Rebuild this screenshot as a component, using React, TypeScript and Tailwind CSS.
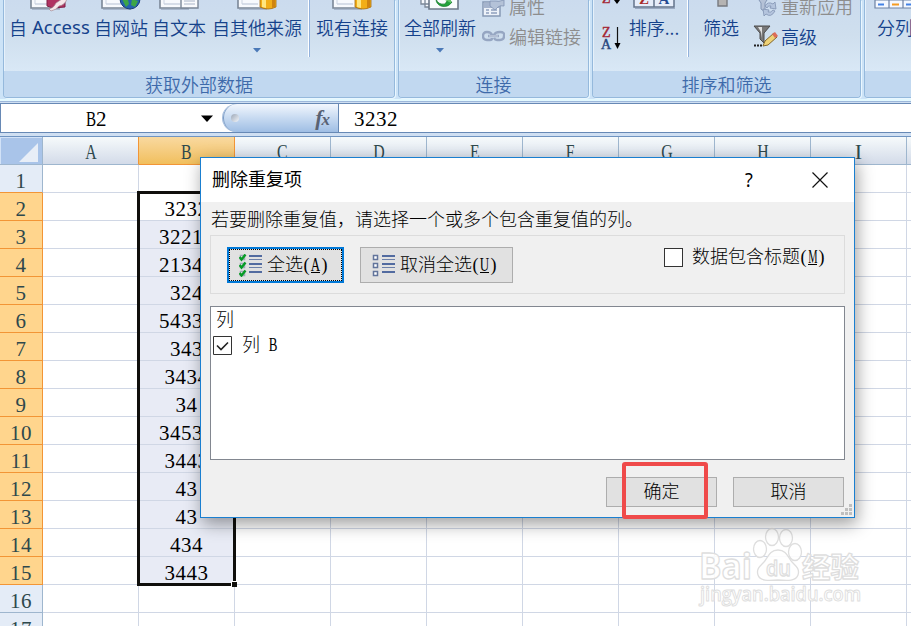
import React from "react";

const SERIF = "font-['Liberation_Serif','Noto_Sans_CJK_SC',serif]";
const SANS = "font-['Noto_Sans_CJK_SC','Noto_Sans',sans-serif]";
const COLS = ["A", "B", "C", "D", "E", "F", "G", "H", "I", "J"];
const VALUES: Record<number, string> = {
  2: "3232", 3: "32213", 4: "21343", 5: "324", 6: "54334", 7: "343", 8: "3434",
  9: "34", 10: "34534", 11: "3443", 12: "43", 13: "43", 14: "434", 15: "3443",
};
const ROWS = Array.from({ length: 17 }, (_, i) => i + 1);

function Letter({ c, small, line }: { c: string; small?: boolean; line?: boolean }) {
  return (
    <span className={`inline-flex justify-center tracking-normal ${small ? "w-[9px]" : "w-[11px]"} ${line ? "h-[18px] border-b border-black" : ""}`}>
      <span className={`inline-block ${c === "I" || c === "(" || c === ")" ? "" : c === "M" ? "scale-x-[0.58]" : "scale-x-[0.72]"}`}>{c}</span>
    </span>
  );
}

function Arrow() {
  return (
    <svg width="8" height="5" viewBox="0 0 8 5" className="mx-auto mt-[11px]">
      <path d="M0 0h8L4 4.5z" fill="#4b79b7" />
    </svg>
  );
}

function Sheet() {
  return (
    <>
      <path d="M2 -4h28v12h-28z" fill="#f7f9fd" stroke="#7b8797" strokeWidth="1.6" />
      <path d="M6 0v4h16M6 4h16" stroke="#cbd3e1" fill="none" />
      <path d="M3 9.5h28" stroke="#8d9cb5" strokeOpacity=".6" />
    </>
  );
}

function Cylinder({ x }: { x: number }) {
  return (
    <>
      <path d={`M${x} -3h16v10q-8 4 -16 0z`} fill="#f2ae18" stroke="#a56b0c" strokeWidth=".8" />
      <path d={`M${x + 2} -3h4v11l-4 -1z`} fill="#ffe680" />
      <path d={`M${x + 12} -3h3v10l-3 1z`} fill="#cf8310" />
    </>
  );
}

type Kind = "access" | "web" | "text" | "other" | "existing" | "refresh" | "sort" | "filter" | "split";

function BigIcon({ kind }: { kind: Kind }) {
  return (
    <svg width="42" height="12" viewBox="0 0 42 12" className="mx-auto block shrink-0">
      {kind === "access" && (<><Sheet /><path d="M18 -2h18v9l-12 1-6-2z" fill="#b03361" stroke="#7c2147" /><path d="M20 9q5-1 7-6l6-4h5q-2 6-8 7-3 4-8 5z" fill="#f6e6e8" stroke="#a58b95" strokeWidth=".7" /></>)}
      {kind === "web" && (<><Sheet /><circle cx="30" cy="-1" r="10" fill="#2562ae" stroke="#183f77" /><path d="M22 -1l6 1 1 4-3 3zM32 -1l6 2-3 6-4-2z" fill="#3ca645" /></>)}
      {kind === "text" && (<><Sheet /><path d="M23 -3h17v11h-17z" fill="#f9fafc" stroke="#7b8797" strokeWidth="1.4" /><path d="M26 1h11M26 4h11" stroke="#a9b4c7" /></>)}
      {kind === "other" && (<><Sheet /><Cylinder x={24} /></>)}
      {kind === "existing" && (<><Sheet /><Cylinder x={24} /></>)}
      {kind === "refresh" && (<><path d="M2 -4h20v8h-20zM6 -2h20v9h-20z" fill="#f7f9fd" stroke="#7b8797" strokeWidth="1.3" /><path d="M10 -4h29v13h-29z" fill="#f9fcfd" stroke="#6d7989" strokeWidth="1.6" /><path d="M17 -1q2 6 9 5l2-3 5 1q-4 6-11 4-5-2-5-7z" fill="#22a43a" stroke="#14752a" strokeWidth=".7" /><path d="M24 -1l8 0 0 4z" fill="#63c568" /></>)}
      {kind === "sort" && (<><path d="M1 -3h20v10h-20zM21 -3h20v10h-20z" fill="#e6edfa" stroke="#64748c" strokeWidth="1.5" /><path d="M2 8.5h40" stroke="#9aa9c2" /><text x="11" y="4" textAnchor="middle" className="font-['Liberation_Serif',serif] text-[15px] font-bold" fill="#aa2b2b">Z</text><text x="31" y="4" textAnchor="middle" className="font-['Liberation_Serif',serif] text-[15px] font-bold" fill="#254a92">A</text></>)}
      {kind === "filter" && <path d="M16 -3h9v9h-9z" fill="#b5b3b2" stroke="#77797f" strokeWidth="1.4" />}
      {kind === "split" && (<><path d="M1 -3h44v11h-44zM1 0h44M15 -3v11M29 -3v11" fill="#f4f8ff" stroke="#6d81a3" strokeWidth="1.2" /><path d="M4 4.500h6M32 4.500h6" stroke="#4381e5" strokeWidth="2" /><path d="M18 4.500h7" stroke="#f59b20" strokeWidth="2" /></>)}
    </svg>
  );
}

function Big({ label, icon, className, arrow }: { label: React.ReactNode; icon: Kind; className: string; arrow?: boolean }) {
  return (
    <div className={`flex shrink-0 flex-col whitespace-nowrap text-[18px] leading-[20px] text-[#15428b] ${className}`}>
      <BigIcon kind={icon} />
      <div className="mt-[5px] flex justify-center">{label}</div>
      {arrow && <Arrow />}
    </div>
  );
}

function Group({ title, className, children }: { title: string; className: string; children: React.ReactNode }) {
  return (
    <section className={`flex h-[98px] shrink-0 flex-col overflow-hidden rounded-b-[4px] border-x border-b border-[#95b9dc] shadow-[1px_1px_0_#eaf7ff] ${className}`}>
      <div className="flex h-[71px] shrink-0 border-l border-[#e6f1fb] bg-linear-to-b from-[#cbdbee] via-[#cfdfee] to-[#d9e8f6]">{children}</div>
      <div className="h-[26px] bg-[#c1d8f0] text-center text-[18px] leading-[26px] text-[#3e6aaa]">{title}</div>
    </section>
  );
}

function Sep({ className }: { className: string }) {
  return <div className={`h-[57px] w-[2px] shrink-0 border-l border-white bg-[#93b2dc] ${className}`} />;
}

function Ribbon() {
  return (
    <header className={`flex h-[101px] w-[1000px] shrink-0 gap-[3px] border-b-2 border-[#e2f8ff] bg-[#cce3f7] pl-[3px] font-[350] ${SANS}`}>
      <Group title="获取外部数据" className="w-[392px]">
        <Big icon="access" label={<>自<span className="ml-[5px] inline-block w-[58px] font-['Noto_Sans',sans-serif] text-[18.500px] font-normal">Access</span></>} className="ml-[4px] w-[81px]" />
        <Big icon="web" label="自网站" className="ml-[4px] w-[54px]" />
        <Big icon="text" label="自文本" className="ml-[4px] w-[54px]" />
        <Big icon="other" label="自其他来源" className="ml-[6px] w-[90px]" arrow />
        <Sep className="ml-[6px]" />
        <Big icon="existing" label="现有连接" className="ml-[6px] w-[72px]" />
      </Group>
      <Group title="连接" className="w-[191px]">
        <Big icon="refresh" label="全部刷新" className="ml-[4px] w-[72px]" arrow />
        <div className="ml-[6px] flex flex-col text-[18px] leading-[20px] text-[#8d8d8d]">
          <div className="-mt-[4px] flex h-[30px] gap-[4px]">
            <svg width="23" height="22" viewBox="0 0 23 22"><path d="M1 6h17v14h-17z" fill="#edf2f9" stroke="#8799b5" strokeWidth="1.5" /><path d="M2 7h15v5h-15z" fill="#a5b4cd" /><path d="M4 14h3M9 14h6M4 17h3M9 17h6" stroke="#8fa0bd" strokeWidth="1.5" /><path d="M8 5h6q2 1 8-1v6q-4-1-6 1l-3 3-5-4z" fill="#b4c2d8" stroke="#8293b3" strokeWidth=".8" /></svg>
            <span>属性</span>
          </div>
          <div className="flex gap-[4px]">
            <svg width="23" height="20" viewBox="0 0 23 20"><path d="M10 9q-1-3-5-3t-4 4q0 4 4 4h3q2 0 2-2M12 9q1-3 6-3t4 4q0 4-4 4h-3q-2 0-3-2M6 10h11" fill="none" stroke="#96a6c2" strokeWidth="2.4" /><path d="M7 10h9" stroke="#dfe6f0" strokeWidth=".8" /></svg>
            <span>编辑链接</span>
          </div>
        </div>
      </Group>
      <Group title="排序和筛选" className="w-[269px]">
        <div className="ml-[6px] flex w-[22px] shrink-0 flex-col">
          <svg width="22" height="55" viewBox="0 0 22 55" className="font-['Liberation_Serif',serif]">
            <text x="2" y="3" className="text-[14px]" fill="#a42634" stroke="#a42634" strokeWidth=".4">Z</text>
            <path d="M17 -2v5" stroke="#111" /><path d="M14 0h6l-3 4z" />
            <text x="2" y="37" className="text-[14px]" fill="#a42634" stroke="#a42634" strokeWidth=".4">Z</text>
            <text x="1" y="49" className="text-[14px]" fill="#27477e" stroke="#27477e" strokeWidth=".4">A</text>
            <path d="M17.500 27v18" stroke="#111" strokeWidth="1.2" /><path d="M14.500 43h6l-3 6z" />
          </svg>
        </div>
        <Big icon="sort" label="排序..." className="ml-[7px] w-[50px]" />
        <Sep className="ml-[8px]" />
        <Big icon="filter" label="筛选" className="ml-[13px] w-[38px]" />
        <div className="ml-[13px] flex flex-col text-[18px] leading-[20px]">
          <div className="-mt-[4px] flex h-[30px] gap-[3px] text-[#8d8d8d]">
            <svg width="25" height="22" viewBox="0 0 25 22"><path d="M4 1h12l-4 6v9l-4-3v-6z" fill="#b5c2d7" stroke="#8496b4" /><path d="M12 10q3-5 8-2l2-2 1 7-6-1 1-2q-3-1-4 2zM22 15q-4 7-9 3l-2 2-1-7 6 1-1 2q3 1 5-2z" fill="#b4c4dd" stroke="#8193b3" strokeWidth=".8" /></svg>
            <span>重新应用</span>
          </div>
          <div className="flex gap-[3px] text-[#15428b]">
            <svg width="25" height="24" viewBox="0 0 25 24" className="-mt-px"><path d="M1 1h16l-6 7v10l-4-4v-6z" fill="#787878" stroke="#4c4c4c" /><path d="M5 2h4v11l-1-6z" fill="#e1e1e1" /><path d="M1 20.500h2M4 20.500h2M7 20.500h2" stroke="#222" strokeWidth="2" /><path d="M10 21l2-5 9-8 3 4-9 8z" fill="#eed276" stroke="#83662b" /><path d="M19 9l3-2 3 4-3 2z" fill="#dc6c58" /></svg>
            <span>高级</span>
          </div>
        </div>
      </Group>
      <Group title="" className="w-[130px]">
        <Big icon="split" label="分列" className="ml-[7px] w-[44px]" />
      </Group>
    </header>
  );
}

function FormulaBar() {
  return (
    <div className={`flex h-[35px] shrink-0 flex-col border-t border-[#9db7da] bg-[#cfdff2] pt-[1px] ${SERIF}`}>
      <div className="flex h-[30px] shrink-0 border-y border-[#6789b5] bg-[#d2e1f4] text-[21px] leading-[30px] tracking-[0.5px] text-black">
        <div className="flex w-[223px] items-start border-l border-[#6789b5] bg-white">
          <span className="ml-[84px] flex w-[22px]"><Letter c="B" /><span>2</span></span>
          <svg width="12" height="7" viewBox="0 0 12 7" className="mt-[11px] ml-[94px]"><path d="M0 0.500h12L6 7z" /></svg>
        </div>
        <div className="w-[115px] bg-white">
          <div className="flex h-[28px] items-center justify-between rounded-l-full border-l border-[#7b9cc6] bg-linear-to-b from-[#f3f7fd] via-[#c7daf1] to-[#9fbee4] pr-[8px] pl-[7px] shadow-[-1px_0_0_#a5bddd]">
            <span className="size-[8px] rounded-full bg-linear-to-br from-[#9da8b8] to-[#f3f6fa]" />
            <span className="text-[22px] leading-[25px] font-bold tracking-normal text-[#596273] italic">f<span className="-ml-px text-[17px]">x</span></span>
          </div>
        </div>
        <div className="flex-1 border-l border-[#6789b5] bg-white pl-[15px]">3232</div>
      </div>
    </div>
  );
}

function Grid() {
  return (
    <main className={`flex w-[1003px] shrink-0 flex-col text-[21px] tracking-[0.5px] ${SERIF}`}>
      <div className="flex h-[29px] border-t border-[#6f94c1] text-[22px] leading-[30px] text-[#2e484c]">
        <div className="flex w-[43px] items-end justify-end border-r border-b border-[#9eb6ce] bg-[#a9c4e9] pr-[4px] pb-[2px] shadow-[inset_1px_1px_0_#d2e2f7]">
          <svg width="19" height="19" viewBox="0 0 19 19"><path d="M19 0v19H0z" fill="#e8eef7" /></svg>
        </div>
        {COLS.map((c) => (
          <div key={c} className={`flex h-[28px] w-[96px] justify-center overflow-hidden border-r border-b ${c === "B" ? "border-[#f29536] bg-linear-to-b from-[#f9d99f] to-[#f1bf5c]" : c === "A" ? "border-r-[#f29536] border-b-[#9eb6ce] bg-linear-to-b from-[#f6fafb] to-[#d3dbe9]" : "border-[#9eb6ce] bg-linear-to-b from-[#f6fafb] to-[#d3dbe9]"}`}>
            <Letter c={c} />
          </div>
        ))}
      </div>
      <div className="relative flex flex-col">
        {ROWS.map((r) => {
          const sel = r >= 2 && r <= 15;
          return (
            <div key={r} className="flex h-[28px] shrink-0 leading-[32px]">
              <div className={`w-[43px] overflow-hidden border-r border-b text-center text-[#2e484c] ${sel ? "border-[#f29536] bg-[#ffd58d]" : r === 1 ? "border-r-[#9eb6ce] border-b-[#f29536] bg-[#e4ecf7]" : "border-[#9eb6ce] bg-[#e4ecf7]"}`}>{r}</div>
              {COLS.map((c) => (
                <div key={c} className={`w-[96px] overflow-hidden border-r border-b border-[#d0d7e5] text-center text-black ${c === "B" && sel && r > 2 ? "bg-[#e8ebf5]" : "bg-white"}`}>{c === "B" ? VALUES[r] : ""}</div>
              ))}
            </div>
          );
        })}
        <div className="absolute top-[26px] left-[137px] h-[395px] w-[99px] border-[3px] border-[#100f0c]" />
        <div className="absolute top-[416px] left-[231px] size-[6px] border-t border-l border-white bg-[#100f0c]" />
      </div>
    </main>
  );
}

function ListIcon({ checked }: { checked?: boolean }) {
  return (
    <svg width="23" height="23" viewBox="0 0 23 23" className="shrink-0">
      {[1, 9, 17].map((y) => (
        <g key={y}>
          <path d={`M1.500 ${y + 0.5}h4v4h-4z`} fill="#fff" stroke={checked ? "#a0a9b7" : "#62749b"} strokeWidth="1.5" />
          <path d={`M10 ${y + 1}h13`} stroke="#526ba0" strokeWidth="2" />
          {y < 17 && <path d={`M10 ${y + 4.5}h13`} stroke="#6c80a9" strokeWidth="1" />}
          {checked && <path d={`M0.500 ${y + 2}l2 2.500 4-5`} fill="none" stroke="#079b25" strokeWidth="2.4" />}
        </g>
      ))}
    </svg>
  );
}

function Key({ c }: { c: string }) {
  return <span className="-ml-px flex"><Letter c="(" small /><Letter c={c} small line /><Letter c=")" small /></span>;
}

function Dialog() {
  return (
    <div className={`absolute top-[157px] left-[200px] flex h-[361px] w-[655px] flex-col border border-[#1a7fd0] bg-[#f0f0f0] text-[18px] leading-[20px] font-light text-black shadow-[2px_6px_16px_rgba(0,0,0,0.38)] ${SERIF}`}>
      <div className={`flex h-[44px] shrink-0 items-center bg-white pl-[11px] font-normal ${SANS}`}>
        <span className="-mt-[4px]">删除重复项</span>
        <span className="-mt-px ml-[442px] w-[10px] scale-x-90 text-center font-['Noto_Sans',sans-serif] text-[20px]">?</span>
        <svg width="16" height="16" viewBox="0 0 16 16" className="ml-[58px]"><path d="M.5.5l15 15M15.500.5l-15 15" stroke="#111" strokeWidth="1.2" /></svg>
      </div>
      <div className="mt-[8px] ml-[10px] whitespace-nowrap">若要删除重复值，请选择一个或多个包含重复值的列。</div>
      <div className="mt-[5px] ml-[9px] flex h-[59px] w-[635px] shrink-0 border border-[#dcdcdc] pt-[11px] pl-[16px]">
        <div className="flex h-[36px] w-[117px] border-2 border-[#0078d7] bg-[#e1e1e1]">
          <div className="flex flex-1 items-center border border-dotted border-black pl-[9px]">
            <ListIcon checked /><span className="ml-[5px]">全选</span><Key c="A" />
          </div>
        </div>
        <div className="ml-[16px] flex h-[36px] w-[153px] items-center border border-[#adadad] bg-[#e1e1e1] pl-[11px]">
          <ListIcon /><span className="ml-[5px]">取消全选</span><Key c="U" />
        </div>
        <div className="ml-[151px] flex h-[20px] items-center">
          <span className="size-[19px] border border-[#333] bg-white" />
          <span className="ml-[9px]">数据包含标题</span><Key c="M" />
        </div>
      </div>
      <div className="mt-[12px] ml-[9px] flex h-[154px] w-[635px] shrink-0 flex-col border border-[#828790] bg-white">
        <div className="mt-[3px] ml-[5px]">列</div>
        <div className="mt-[5px] ml-[2px] flex h-[20px] items-center">
          <svg width="19" height="19" viewBox="0 0 19 19"><path d="M.5.5h18v18H.5z" fill="#fff" stroke="#333" /><path d="M4 9.500l4 4 7-7" fill="none" stroke="#222" strokeWidth="1.6" /></svg>
          <span className="ml-[10px]">列</span><span className="ml-[8px]"><Letter c="B" small /></span>
        </div>
      </div>
      <div className="mt-[17px] flex shrink-0 pl-[405px] leading-[28px]">
        <div className="h-[30px] w-[111px] border border-[#adadad] bg-[#e1e1e1] text-center">确定</div>
        <div className="ml-[16px] h-[30px] w-[111px] border border-[#adadad] bg-[#e1e1e1] text-center">取消</div>
      </div>
      <svg width="11" height="11" viewBox="0 0 11 11" className="absolute right-[2px] bottom-[2px]"><path d="M8 0h3v3H8zM4 4h3v3H4zM8 4h3v3H8zM0 8h3v3H0zM4 8h3v3H4zM8 8h3v3H8z" fill="#bfbfbf" /></svg>
      <div className="absolute top-[304px] left-[421px] h-[57px] w-[86px] rounded-[3px] border-4 border-[#ef4a4a]" />
    </div>
  );
}

function Watermark() {
  return (
    <svg width="176" height="84" viewBox="0 0 176 84" className="absolute top-[526px] left-[693px]" fill="#fff" fillOpacity=".9" stroke="#dedede" strokeWidth="1.3" strokeLinejoin="round">
      <g className="font-['Open_Sans','Noto_Sans_CJK_SC',sans-serif]">
        <text x="6" y="53" textLength="53" lengthAdjust="spacingAndGlyphs" className="text-[36px] font-bold">Bai</text>
        <text x="109" y="52" textLength="57" lengthAdjust="spacingAndGlyphs" className="text-[28px] font-bold">经验</text>
        <text x="7" y="75" textLength="161" lengthAdjust="spacingAndGlyphs" strokeWidth="1" className="text-[20px] font-semibold">jingyan.baidu.com</text>
      </g>
      <ellipse cx="67" cy="23" rx="6.500" ry="8.500" /><ellipse cx="79" cy="11" rx="6.500" ry="8.500" /><ellipse cx="93" cy="12" rx="6.500" ry="8.500" /><ellipse cx="102" cy="26" rx="6.500" ry="8.500" />
      <path d="M85 24c-9 0-10 8-14 12s-8 7-6 13c2 6 10 6 20 5 10 1 18 1 20-5s-2-9-6-13-5-12-14-12z" />
      <text x="73" y="50" textLength="25" lengthAdjust="spacingAndGlyphs" className="font-['Open_Sans',sans-serif] text-[22px] font-semibold">du</text>
    </svg>
  );
}

export default function App() {
  return (
    <div className="relative flex h-[626px] w-[911px] flex-col overflow-hidden bg-white">
      <Ribbon />
      <FormulaBar />
      <Grid />
      <Watermark />
      <Dialog />
    </div>
  );
}
